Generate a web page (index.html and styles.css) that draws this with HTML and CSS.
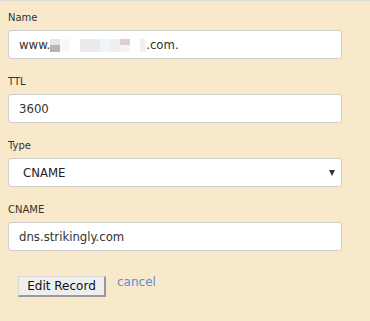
FILE: index.html
```html
<!DOCTYPE html>
<html>
<head>
<meta charset="utf-8">
<link rel="stylesheet" href="styles.css">
</head>
<body>
<form class="record-form">
  <div class="field">
    <label class="field-label">Name</label>
    <div class="text-input">www.<span class="blur"><span class="b b1"></span><span class="b b2"></span><span class="b b3"></span><span class="b b4"></span><span class="b b5"></span><span class="b b6"></span><span class="b b7"></span><span class="b b8"></span></span>.com.</div>
  </div>
  <div class="field">
    <label class="field-label">TTL</label>
    <div class="text-input">3600</div>
  </div>
  <div class="field">
    <label class="field-label">Type</label>
    <div class="select-input">CNAME<span class="arrow"></span></div>
  </div>
  <div class="field">
    <label class="field-label">CNAME</label>
    <div class="text-input">dns.strikingly.com</div>
  </div>
  <div class="actions">
    <button type="button" class="btn">Edit Record</button>
    <a class="cancel" href="#">cancel</a>
  </div>
</form>
</body>
</html>
```
FILE: styles.css
```css
html, body {
  margin: 0;
  padding: 0;
}
body {
  background: #f9e9cb;
  border-top: 1px solid #dcdcdc;
  font-family: "DejaVu Sans", Verdana, sans-serif;
  height: 320px;
}
.record-form {
  padding: 11px 0 0 8px;
  width: 334px;
}
.field {
  margin-bottom: 17px;
}
.field-label {
  display: block;
  font-size: 10px;
  line-height: 12px;
  color: #333;
  margin-bottom: 6px;
}
.text-input,
.select-input {
  box-sizing: border-box;
  height: 29px;
  background: #fff;
  border: 1px solid #cfcfcf;
  border-radius: 3px;
  font-family: "DejaVu Sans Condensed", "DejaVu Sans", sans-serif;
  font-stretch: condensed;
  font-size: 13px;
  line-height: 27px;
  color: #333;
  padding-left: 10px;
  display: flex;
  align-items: center;
}
.select-input {
  position: relative;
  padding-left: 14px;
  color: #222;
}
.arrow {
  position: absolute;
  right: 6px;
  top: 11px;
  width: 0;
  height: 0;
  border-left: 3px solid transparent;
  border-right: 3px solid transparent;
  border-top: 6px solid #333;
}
.blur {
  display: inline-flex;
  height: 13px;
  margin-top: 1px;
}
.b { display: inline-block; height: 13px; }
.b1 { width: 10px; background: linear-gradient(#e6e6e6 50%, #b8b4b2 50%); }
.b2 { width: 10px; background: #f6f8fa; }
.b3 { width: 10px; background: #fff; }
.b4 { width: 20px; background: #ebebef; }
.b5 { width: 10px; background: #eef6fa; }
.b6 { width: 10px; background: #f0efef; }
.b7 { width: 10px; background: linear-gradient(#dfd0d0 50%, #f7f2f2 50%); }
.b8 { width: 16px; background: linear-gradient(90deg, #fff 60%, #f5efef 60%); }
.actions {
  display: flex;
  align-items: flex-start;
  padding-top: 8px;
  padding-left: 10px;
}
.btn {
  box-sizing: border-box;
  width: 88px;
  height: 21px;
  padding: 0;
  margin: 0;
  background: #efefef;
  border: 1px solid #d8d8d8;
  border-right: 2px solid #9a9a9a;
  border-bottom: 2px solid #9a9a9a;
  font-family: "DejaVu Sans", Verdana, sans-serif;
  font-size: 12px;
  line-height: 17px;
  color: #111;
}
.cancel {
  margin-left: 11px;
  margin-top: -2px;
  font-size: 12px;
  line-height: 16px;
  color: #5b8fd0;
  text-decoration: none;
}
```
